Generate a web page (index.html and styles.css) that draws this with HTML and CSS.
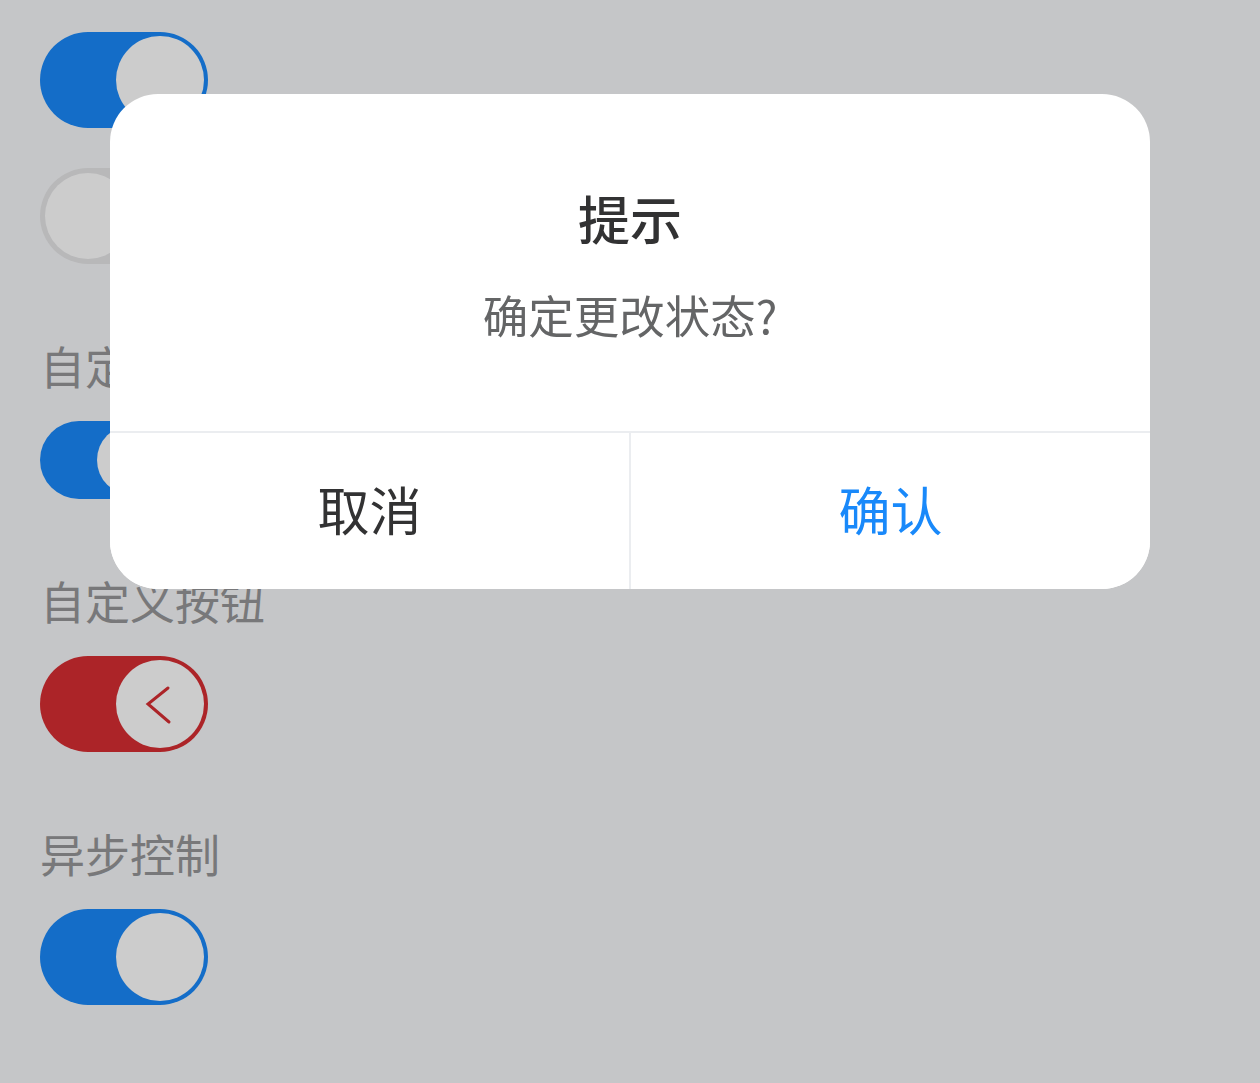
FILE: index.html
```html
<!DOCTYPE html>
<html lang="zh-CN">
<head>
<meta charset="utf-8">
<title>Switch</title>
<link rel="stylesheet" href="styles.css">
</head>
<body>
<main class="page">
  <div class="switch on"><span class="knob"></span></div>
  <div class="switch off"><span class="knob"></span></div>

  <h2 class="label">自定义大小</h2>
  <div class="switch on small"><span class="knob"></span></div>

  <h2 class="label">自定义按钮</h2>
  <div class="switch on red">
    <span class="knob">
      <svg class="chevron" viewBox="0 0 88 88" width="88" height="88">
        <polyline points="52,28 32,44 53,62" fill="none" stroke="#d82e32" stroke-width="3" stroke-linecap="round" stroke-linejoin="miter"/>
      </svg>
    </span>
  </div>

  <h2 class="label">异步控制</h2>
  <div class="switch on"><span class="knob"></span></div>
</main>

<div class="overlay"></div>

<div class="dialog" role="dialog">
  <div class="dialog-title">提示</div>
  <div class="dialog-message">确定更改状态?</div>
  <div class="dialog-footer">
    <button class="dialog-btn cancel">取消</button>
    <button class="dialog-btn confirm">确认</button>
  </div>
</div>
</body>
</html>
```
FILE: styles.css
```css
html, body {
  margin: 0;
  padding: 0;
}

body {
  background: #f7f8fa;
  font-family: "Noto Sans CJK SC", "Noto Sans", sans-serif;
  height: 1083px;
  overflow: hidden;
}

.page {
  padding: 32px 0 0 40px;
}

.switch {
  box-sizing: border-box;
  width: 168px;
  height: 96px;
  border-radius: 48px;
  padding: 4px;
  display: flex;
  justify-content: flex-end;
  background: #1989fa;
}

.switch + .switch {
  margin-top: 40px;
}

.switch .knob {
  width: 88px;
  height: 88px;
  border-radius: 50%;
  background: #ffffff;
  display: block;
  flex: none;
}

.switch.off {
  justify-content: flex-start;
  background: #e6e6e8;
  padding: 5px;
}

.switch.off .knob {
  width: 86px;
  height: 86px;
}

.switch.small {
  width: 131px;
  height: 78px;
  border-radius: 39px;
}

.switch.small .knob {
  width: 70px;
  height: 70px;
}

.switch.red {
  background: #d82e32;
}

.chevron {
  display: block;
}

.label {
  margin: 0;
  padding: 70px 0 23px;
  font-size: 45px;
  line-height: 64px;
  font-weight: 400;
  color: #969799;
}

.overlay {
  position: fixed;
  inset: 0;
  background: rgba(0, 0, 0, 0.2);
}

.dialog {
  position: fixed;
  left: 110px;
  top: 94px;
  width: 1040px;
  background: #ffffff;
  border-radius: 48px;
  overflow: hidden;
}

.dialog-title {
  padding-top: 85px;
  line-height: 78px;
  font-size: 52px;
  font-weight: 500;
  color: #323233;
  text-align: center;
}

.dialog-message {
  padding: 25px 78px 84px;
  line-height: 65px;
  font-size: 45.5px;
  color: #646566;
  text-align: center;
}

.dialog-footer {
  display: flex;
  border-top: 2px solid #ebedf0;
}

.dialog-btn {
  flex: 1;
  height: 156px;
  margin: 0;
  padding: 0 0 6px;
  border: 0;
  background: #ffffff;
  font-family: inherit;
  font-size: 52px;
  color: #323233;
}

.dialog-btn.confirm {
  color: #1989fa;
  border-left: 2px solid #ebedf0;
}
```
